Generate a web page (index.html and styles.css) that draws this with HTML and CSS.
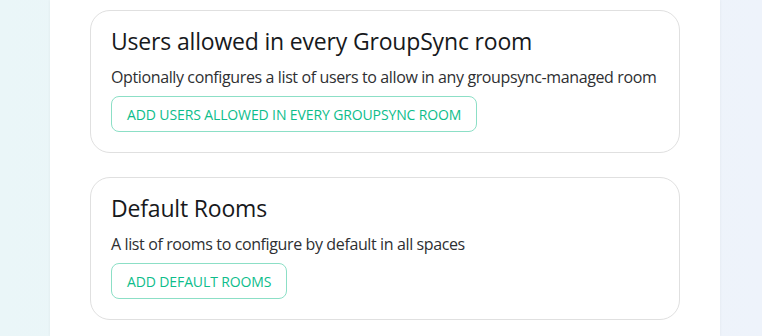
FILE: index.html
```html
<!DOCTYPE html>
<html lang="en">
<head>
    <meta charset="UTF-8">
    <meta name="viewport" content="width=device-width, initial-scale=1.0">
    <title>GroupSync Settings</title>
    <link rel="stylesheet" href="styles.css">
</head>
<body>
    <div class="page">
        <div class="panel">
            <div class="card">
                <h2>Users allowed in every GroupSync room</h2>
                <p>Optionally configures a list of users to allow in any groupsync-managed room</p>
                <button class="add-btn">Add users allowed in every GroupSync room</button>
            </div>
            <div class="card">
                <h2>Default Rooms</h2>
                <p>A list of rooms to configure by default in all spaces</p>
                <button class="add-btn">Add default rooms</button>
            </div>
        </div>
    </div>
</body>
</html>
```

FILE: styles.css
```css
html, body {
    margin: 0;
    height: 100%;
}
body {
    font-family: "Open Sans", "Noto Sans", sans-serif;
    color: #2e2f32;
    background: linear-gradient(90deg, #eaf6f8 0%, #eef3fb 100%);
    overflow: hidden;
}
.page {
    display: flex;
    height: 100%;
    padding-left: 50px;
}
.panel {
    width: 670px;
    background-color: white;
    box-shadow: 0 0 3px rgba(0,0,0,0.06);
    padding: 10px 40px;
    box-sizing: border-box;
    display: flex;
    flex-direction: column;
    gap: 24px;
}
.card {
    border: 1px solid #e0e0e0;
    border-radius: 20px;
    padding: 14px 20px 20px;
    box-sizing: border-box;
    height: 143px;
}
h2 {
    margin: 0;
    font-size: 23px;
    font-weight: 400;
    line-height: 32px;
    letter-spacing: -0.18px;
    color: #17191c;
}
p {
    margin: 9px 0 8px;
    font-size: 16px;
    line-height: 22px;
    letter-spacing: -0.38px;
}
.add-btn {
    font-family: inherit;
    height: 36px;
    padding: 0 15px;
    background: white;
    border: 1px solid #8cdfc6;
    border-radius: 8px;
    color: #0dbd8b;
    font-size: 14px;
    letter-spacing: -0.12px;
    text-transform: uppercase;
    cursor: pointer;
}
```
